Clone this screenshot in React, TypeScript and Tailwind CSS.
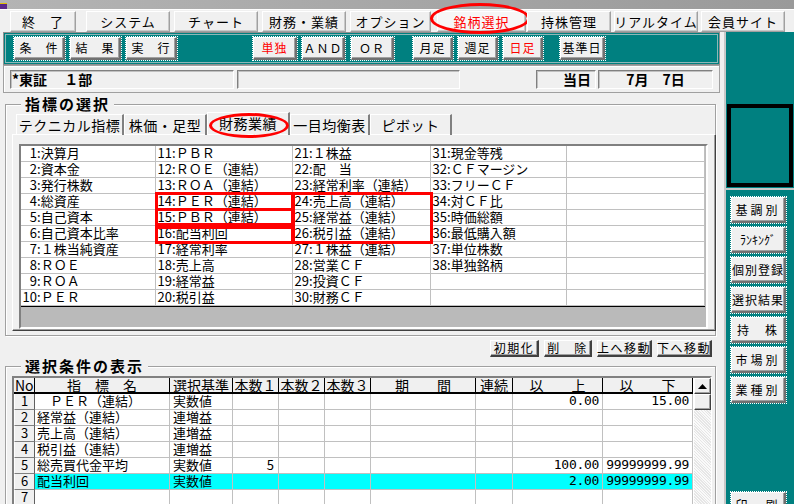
import React from 'react';

type Cell = { n: number; t: string } | null;

// indicator grid: 10 rows x 5 columns (last column empty)
const INDICATORS: Cell[][] = [
  [{ n: 1, t: '決算月' }, { n: 11, t: 'ＰＢＲ' }, { n: 21, t: '１株益' }, { n: 31, t: '現金等残' }, null],
  [{ n: 2, t: '資本金' }, { n: 12, t: 'ＲＯＥ（連結）' }, { n: 22, t: '配　当' }, { n: 32, t: 'ＣＦマージン' }, null],
  [{ n: 3, t: '発行株数' }, { n: 13, t: 'ＲＯＡ（連結）' }, { n: 23, t: '経常利率（連結）' }, { n: 33, t: 'フリーＣＦ' }, null],
  [{ n: 4, t: '総資産' }, { n: 14, t: 'ＰＥＲ（連結）' }, { n: 24, t: '売上高（連結）' }, { n: 34, t: '対ＣＦ比' }, null],
  [{ n: 5, t: '自己資本' }, { n: 15, t: 'ＰＢＲ（連結）' }, { n: 25, t: '経常益（連結）' }, { n: 35, t: '時価総額' }, null],
  [{ n: 6, t: '自己資本比率' }, { n: 16, t: '配当利回' }, { n: 26, t: '税引益（連結）' }, { n: 36, t: '最低購入額' }, null],
  [{ n: 7, t: '１株当純資産' }, { n: 17, t: '経常利率' }, { n: 27, t: '１株益（連結）' }, { n: 37, t: '単位株数' }, null],
  [{ n: 8, t: 'ＲＯＥ' }, { n: 18, t: '売上高' }, { n: 28, t: '営業ＣＦ' }, { n: 38, t: '単独銘柄' }, null],
  [{ n: 9, t: 'ＲＯＡ' }, { n: 19, t: '経常益' }, { n: 29, t: '投資ＣＦ' }, null, null],
  [{ n: 10, t: 'ＰＥＲ' }, { n: 20, t: '税引益' }, { n: 30, t: '財務ＣＦ' }, null, null],
];

const GRID_COLS = ['w-[135px]', 'w-[137px]', 'w-[138px]', 'w-[136px]', 'w-[138px]'];

type Cond = {
  name: string;
  basis: string;
  n1?: string;
  low?: string;
  high?: string;
  active?: boolean;
};

const CONDITIONS: Cond[] = [
  { name: '　ＰＥＲ（連結）', basis: '実数値', low: '0.00', high: '15.00' },
  { name: '経常益（連結）', basis: '連増益' },
  { name: '売上高（連結）', basis: '連増益' },
  { name: '税引益（連結）', basis: '連増益' },
  { name: '総売買代金平均', basis: '実数値', n1: '5', low: '100.00', high: '99999999.99' },
  { name: '配当利回', basis: '実数値', low: '2.00', high: '99999999.99', active: true },
  { name: '', basis: '' },
];

const MENU = [
  { label: '終　了', w: 'w-[66px]', ml: 'ml-[10px]' },
  { label: 'システム', w: 'w-[84px]', ml: 'ml-[10px]' },
  { label: 'チャート', w: 'w-[84px]', ml: 'ml-[4px]' },
  { label: '財務・業績', w: 'w-[84px]', ml: 'ml-[4px]' },
  { label: 'オプション', w: 'w-[81px]', ml: 'ml-[4px]' },
  { label: '銘柄選択', w: 'w-[89px]', ml: 'ml-[6px]', red: true },
  { label: '持株管理', w: 'w-[84px]', ml: 'ml-[1px]' },
  { label: 'リアルタイム', w: 'w-[84px]', ml: 'ml-[3px]' },
  { label: '会員サイト', w: 'w-[84px]', ml: 'ml-[3px]' },
];

const TOOLS = [
  { label: '条　件', w: 'w-[51px]', ml: 'ml-[8px]' },
  { label: '結　果', w: 'w-[51px]', ml: 'ml-[5px]' },
  { label: '実　行', w: 'w-[51px]', ml: 'ml-[5px]' },
  { label: '単独', w: 'w-[44px]', ml: 'ml-[76px]', red: true },
  { label: 'ＡＮＤ', w: 'w-[43px]', ml: 'ml-[5px]' },
  { label: 'ＯＲ', w: 'w-[43px]', ml: 'ml-[6px]' },
  { label: '月足', w: 'w-[40px]', ml: 'ml-[19px]' },
  { label: '週足', w: 'w-[40px]', ml: 'ml-[5px]' },
  { label: '日足', w: 'w-[40px]', ml: 'ml-[5px]', red: true },
  { label: '基準日', w: 'w-[45px]', ml: 'ml-[17px]' },
];

const SIDE = [
  { l: '基調別', t: 'tracking-[3px]' },
  { l: 'ﾗﾝｷﾝｸﾞ', t: 'tracking-[0px] text-[11px]' },
  { l: '個別登録', t: 'tracking-[1px]' },
  { l: '選択結果', t: 'tracking-[1px]' },
  { l: '持　株', t: 'tracking-[2px]' },
  { l: '市場別', t: 'tracking-[3px]' },
  { l: '業種別', t: 'tracking-[3px]' },
];

function RaisedBtn({ children, className = '' }: { children: React.ReactNode; className?: string }) {
  return (
    <div
      className={`flex items-center justify-center bg-[#f0f0f0] border border-t-white border-l-white border-r-[#404040] border-b-[#404040] shadow-[inset_-1px_-1px_0_#a0a0a0] whitespace-nowrap ${className}`}
    >
      {children}
    </div>
  );
}

function GroupBox({ title, className = '', children }: { title: string; className?: string; children: React.ReactNode }) {
  return (
    <div className={`relative shrink-0 mx-[5px] border border-[#a0a0a0] shadow-[inset_1px_1px_0_#fff,1px_1px_0_#fff] ${className}`}>
      <span className="absolute left-[15px] -top-[9px] bg-[#f0f0f0] px-[4px] text-[15px] font-bold leading-[16px] tracking-[2px]">
        {title}
      </span>
      {children}
    </div>
  );
}

function IndicatorGrid() {
  return (
    <div className="relative ml-[6px] mt-[9px] w-[689px] h-[185px] bg-[#bababa] border-2 border-t-[#808080] border-l-[#808080] border-r-white border-b-white">
      <div className="w-[684px] bg-white border-r border-b border-black">
        {INDICATORS.map((row, r) => (
          <div key={r} className="flex h-[16px]">
            {row.map((cell, c) => (
              <div
                key={c}
                className={`${GRID_COLS[c]} shrink-0 border-r border-b border-[#c0c0c0] text-[13px] leading-[14px] pl-[1px] whitespace-nowrap`}
              >
                {cell && (
                  <>
                    <span className="inline-block w-[15px] text-right">{cell.n}</span>
                    <span>:{cell.t}</span>
                  </>
                )}
              </div>
            ))}
          </div>
        ))}
      </div>
      {/* red annotation boxes */}
      <div className="absolute left-[134px] top-[46px] w-[139px] h-[19px] border-[3px] border-[#ff0000]" />
      <div className="absolute left-[134px] top-[62px] w-[139px] h-[18px] border-[3px] border-[#ff0000]" />
      <div className="absolute left-[134px] top-[80px] w-[139px] h-[18px] border-[3px] border-[#ff0000]" />
      <div className="absolute left-[271px] top-[46px] w-[141px] h-[52px] border-[3px] border-[#ff0000]" />
    </div>
  );
}

function Tabs() {
  const tab = 'flex items-center justify-center h-[21px] text-[14px] leading-none tracking-[0.5px] border-t border-l border-t-white border-l-white border-r-2 border-r-[#808080] whitespace-nowrap';
  return (
    <div className="flex items-end h-[23px] ml-[10px] mt-[7px]">
      <div className={`${tab} w-[108px]`}>テクニカル指標</div>
      <div className={`${tab} w-[83px]`}>株価・足型</div>
      <div className="relative">
        <div className={`${tab} w-[83px] h-[23px] pb-[2px]`}>財務業績</div>
        <div className="absolute left-[2px] top-[1px] w-[80px] h-[25px] border-[3px] border-[#ff0000] rounded-[50%]" />
      </div>
      <div className={`${tab} w-[80px]`}>一目均衡表</div>
      <div className={`${tab} w-[82px]`}>ピボット</div>
    </div>
  );
}

const COND_COLS = [
  { w: 'w-[21px]', h: 'No' },
  { w: 'w-[135px]', h: '指　標　名' },
  { w: 'w-[63px]', h: '選択基準' },
  { w: 'w-[46px]', h: '本数１' },
  { w: 'w-[46px]', h: '本数２' },
  { w: 'w-[46px]', h: '本数３' },
  { w: 'w-[105px]', h: '期　　間' },
  { w: 'w-[37px]', h: '連続' },
  { w: 'w-[90px]', h: '以　　上' },
  { w: 'w-[90px]', h: '以　　下' },
];

function ConditionTable() {
  const cell = 'shrink-0 border-r border-b border-[#c0c0c0] text-[13px] leading-[14px] whitespace-nowrap';
  const num = "font-['DejaVu_Sans_Mono',monospace] text-[12px] tracking-[-0.3px]";
  return (
    <div className="ml-[6px] mt-[9px] w-[700px] h-[140px] bg-white border-2 border-t-[#808080] border-l-[#808080] border-r-white border-b-white flex">
      <div className="w-[679px] flex flex-col">
        <div className="flex h-[16px] shrink-0 border-b-2 border-black bg-[#f0f0f0]">
          {COND_COLS.map((c, i) => (
            <div
              key={i}
              className={`${c.w} shrink-0 border-r border-black text-[14px] leading-[14px] whitespace-nowrap ${i === 0 ? 'text-left pl-[1px]' : 'text-center'}`}
            >
              {c.h}
            </div>
          ))}
        </div>
        {CONDITIONS.map((row, i) => {
          const bg = row.active ? 'bg-[#00ffff]' : '';
          return (
            <div key={i} className="flex h-[16px] shrink-0">
              <div className="w-[21px] shrink-0 bg-[#f0f0f0] border-r border-b border-r-[#606060] border-b-[#808080] border-l border-l-white text-[13px] leading-[14px] text-center">
                {i + 1}
              </div>
              <div className={`${cell} w-[135px] pl-[2px] ${bg}`}>{row.name}</div>
              <div className={`${cell} w-[63px] pl-[3px] ${bg}`}>{row.basis}</div>
              <div className={`${cell} w-[46px] text-right pr-[4px] ${bg}`}>{row.n1}</div>
              <div className={`${cell} w-[46px] ${bg}`} />
              <div className={`${cell} w-[46px] ${bg}`} />
              <div className={`${cell} w-[105px] ${bg}`} />
              <div className={`${cell} w-[37px] ${bg}`} />
              <div className={`${cell} w-[90px] text-right pr-[3px] ${num} ${bg}`}>{row.low}</div>
              <div className={`${cell} w-[90px] text-right pr-[3px] ${num} ${bg}`}>{row.high}</div>
            </div>
          );
        })}
      </div>
      {/* scroll bar */}
      <div className="w-[17px] ml-[1px] flex flex-col bg-[repeating-linear-gradient(45deg,#e6e6e6_0px,#e6e6e6_1px,#fafafa_1px,#fafafa_2px)]">
        <RaisedBtn className="h-[16px] w-[17px] shrink-0">
          <svg width="9" height="5" viewBox="0 0 9 5">
            <path d="M4.5 0 L9 5 L0 5 Z" fill="#000" />
          </svg>
        </RaisedBtn>
        <RaisedBtn className="h-[16px] w-[17px] shrink-0">{null}</RaisedBtn>
      </div>
    </div>
  );
}

const sideBtn =
  'w-[55px] h-[26px] shrink-0 text-[12px] outline outline-1 outline-dotted outline-white border-r-2 border-b-2 border-r-[#707070] border-b-[#707070]';

function SidePanel() {
  return (
    <div className="w-[70px] ml-[3px] bg-[#008080] border-l-2 border-l-[#c8c8c8] flex flex-col overflow-hidden">
      <div className="h-[72px] shrink-0" />
      <div className="mx-[1px] h-[83px] shrink-0 border-4 border-black bg-[#008080]" />
      <div className="h-[2px] shrink-0 mt-[1px] bg-[#c8c8c8]" />
      <div className="flex flex-col gap-[4px] mt-[7px] ml-[5px]">
        {SIDE.map((s) => (
          <RaisedBtn key={s.l} className={`${sideBtn} ${s.t}`}>
            {s.l}
          </RaisedBtn>
        ))}
        <RaisedBtn className={`${sideBtn} tracking-[3px] mt-[85px]`}>印　刷</RaisedBtn>
      </div>
    </div>
  );
}

export default function App() {
  return (
    <div className="w-[794px] h-[504px] overflow-hidden bg-[#f0f0f0] text-black font-['Noto_Sans_CJK_JP','Noto_Sans',sans-serif] flex flex-col">
      {/* window caption remnant */}
      <div className="h-[9px] shrink-0 flex items-end bg-[linear-gradient(to_right,#b4b4b4,#a4a4a4_60%,#9a9a9a)]">
        <div className="w-[7px] h-[6px] bg-[#5a2a8a] border-t border-[#e0c000]" />
      </div>

      {/* main menu */}
      <div className="h-[23px] shrink-0 border-t border-white flex items-start pt-[1px]">
        {MENU.map((m) => (
          <div key={m.label} className={`relative ${m.ml}`}>
            <div
              className={`${m.w} h-[21px] flex items-center justify-center bg-[#f0f0f0] border border-t-white border-l-white border-r-[#a0a0a0] border-b-[#a0a0a0] shadow-[inset_-1px_-1px_0_#c8c8c8] text-[13px] leading-none tracking-[1px] whitespace-nowrap ${m.red ? 'text-[#ff0000] bg-[#f6f6f6]' : ''}`}
            >
              {m.label}
            </div>
            {m.red && (
              <div className="absolute -left-[7px] -top-[8px] w-[100px] h-[31px] border-[3px] border-[#ff0000] rounded-[50%]" />
            )}
          </div>
        ))}
      </div>

      <div className="flex flex-1 min-h-0">
        <div className="w-[721px] shrink-0 flex flex-col overflow-hidden">
          {/* toolbar */}
          <div className="shrink-0 ml-[3px] w-[717px] h-[33px] bg-[#008080] border border-[#909090] p-[1px]">
            <div className="h-full border border-[#8fb8b8] flex items-center">
              {TOOLS.map((t) => (
                <RaisedBtn
                  key={t.label}
                  className={`${t.w} ${t.ml} h-[23px] text-[12px] tracking-[1px] outline outline-1 outline-dotted outline-white border-r-2 border-b-2 border-r-[#707070] border-b-[#707070] ${t.red ? 'text-[#ff0000]' : ''}`}
                >
                  {t.label}
                </RaisedBtn>
              ))}
            </div>
          </div>

          {/* market / date row */}
          <div className="shrink-0 ml-[3px] w-[717px] h-[28px] border border-[#a0a0a0] shadow-[inset_1px_1px_0_#fff] flex items-center text-[14px] font-bold leading-none">
            <div className="ml-[6px] w-[224px] h-[19px] border border-t-[#808080] border-l-[#808080] border-r-white border-b-white shadow-[inset_1px_1px_0_#c0c0c0] flex items-center pl-[1px] whitespace-nowrap">
              *東証　 １部
            </div>
            <div className="ml-[3px] w-[223px] h-[19px] border border-t-[#808080] border-l-[#808080] border-r-white border-b-white shadow-[inset_1px_1px_0_#c0c0c0]" />
            <div className="ml-[76px] w-[60px] h-[19px] border border-t-[#808080] border-l-[#808080] border-r-white border-b-white shadow-[inset_1px_1px_0_#c0c0c0] flex items-center justify-end pr-[4px]">
              当日
            </div>
            <div className="ml-[2px] w-[115px] h-[19px] border border-t-[#808080] border-l-[#808080] border-r-white border-b-white shadow-[inset_1px_1px_0_#c0c0c0] flex items-center justify-center">
              7月　7日
            </div>
          </div>

          {/* indicator selection */}
          <GroupBox title="指標の選択" className="mt-[11px] h-[232px]">
            <Tabs />
            <div className="ml-[6px] w-[704px] h-[197px] -mt-[1px] border border-t-white border-l-white border-r-[#404040] border-b-[#404040] shadow-[inset_-1px_-1px_0_#a0a0a0]">
              <IndicatorGrid />
            </div>
          </GroupBox>

          {/* actions */}
          <div className="shrink-0 h-[20px] mt-[4px] flex items-start justify-end pr-[9px]">
            {[
              { l: '初期化', w: 'w-[49px]' },
              { l: '削　除', w: 'w-[48px]' },
              { l: '上へ移動', w: 'w-[55px]' },
              { l: '下へ移動', w: 'w-[55px]' },
            ].map((b) => (
              <RaisedBtn
                key={b.l}
                className={`${b.w} ml-[5px] h-[17px] text-[12px] tracking-[1.5px] leading-none border-r-2 border-b-2 border-r-[#404040] border-b-[#404040]`}
              >
                {b.l}
              </RaisedBtn>
            ))}
          </div>

          {/* condition list */}
          <GroupBox title="選択条件の表示" className="mt-[6px] h-[160px] border-b-0">
            <ConditionTable />
          </GroupBox>
        </div>

        <SidePanel />
      </div>
    </div>
  );
}
